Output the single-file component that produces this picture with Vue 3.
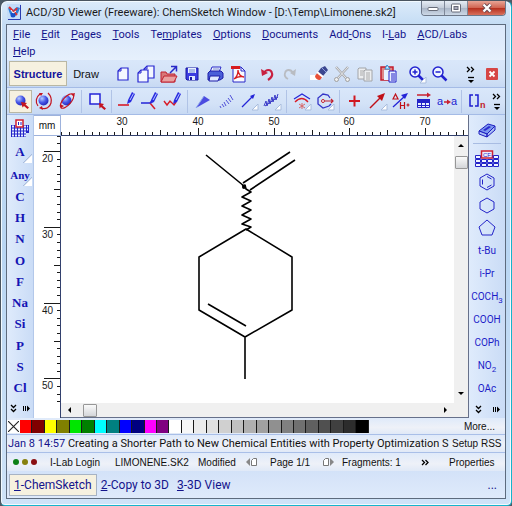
<script setup>
const menus = [
  ['', 'F', 'ile'], ['', 'E', 'dit'], ['', 'P', 'ages'], ['', 'T', 'ools'],
  ['Te', 'm', 'plates'], ['', 'O', 'ptions'], ['', 'D', 'ocuments'],
  ['Add', '-', 'Ons'], ['I-', 'L', 'ab'], ['', 'A', 'CD/Labs'], ['', 'H', 'elp'],
]

const pencil = '<path d="M11 9l4-8 3 2-4 8-4 2z" fill="#2a2ae0"/><path d="M13 9l3.5-6.5" stroke="#b4caff" stroke-width="1"/>'
const sheet = (x, y) => `<path d="M${x + 3} ${y}h7v12h-10v-9z" fill="#f4f7ff" stroke="#2525d0" stroke-width="1.2"/><path d="M${x + 3} ${y}v3h-3" fill="none" stroke="#2525d0"/>`
const ball = '<circle cx="9.5" cy="9.5" r="5" fill="url(#ball)"/>'
const corner = '<path d="M19 13v6h-6z" fill="#fff" stroke="#a9bddd" stroke-width="1"/>'
const lens = (mark) => `<path d="M11.5 11.5l5 5" stroke="#2222d0" stroke-width="2.5"/><circle cx="8" cy="8" r="5" fill="#eef5ff" stroke="#2222d0" stroke-width="1.5"/><path d="${mark}" stroke="#2222d0" stroke-width="1.5"/>`

const icons = {
  new: sheet(5, 4),
  copies: sheet(8, 2) + sheet(2, 6),
  open: '<path d="M2 8h5l1 2h8v8H2z" fill="#d87878" stroke="#c02030"/><path d="M2 18l3-6h13l-3 6z" fill="#e9a0a0" stroke="#c02030"/><path d="M11 9l6-6M12 2.5h5.5v5" fill="none" stroke="#2828c8" stroke-width="1.5"/>',
  save: '<path d="M4 4h12v12H5l-1-1z" fill="#3c3ce0" stroke="#1818a0"/><path d="M6 4h8v5H6z" fill="#e8f0ff"/><path d="M7 6h6M7 8h6" stroke="#7088d0"/><path d="M7 12h6v4H7z" fill="#dfe8ff"/><path d="M8 13h2v3H8z" fill="#1818a0"/>',
  print: '<path d="M7 3h9l-2 5H5z" fill="#eef3ff" stroke="#2828c8"/><path d="M3 9l2-2h11l2 2v5l-3 2H3z" fill="#4a5fd8" stroke="#1c1ca8"/><path d="M5 12h10l-2 5H4z" fill="#dfe8ff" stroke="#1c1ca8"/><path d="M8 5h6" stroke="#8090d0"/>',
  pdf: '<path d="M5 3h8l4 4v11H5z" fill="#f8faff" stroke="#2828c8"/><path d="M13 3v4h4" fill="none" stroke="#2828c8"/><path d="M3 2h9v3H3z" fill="#d81c20"/><path d="M6 15c3-2 4-6 4-9 0 4 3 7 6 7-3-1-7 0-10 2z" fill="none" stroke="#d81c20" stroke-width="1.3"/>',
  undo: '<path d="M7 9c2-4 7-4 8 0 1 3-1 5-4 7" fill="none" stroke="#c82040" stroke-width="2.2"/><path d="M4 5l1 7 6-3z" fill="#c82040"/>',
  redo: '<path d="M13 9c-2-4-7-4-8 0-1 3 1 5 3 6" fill="none" stroke="#b9bcc2" stroke-width="1.8"/><path d="M16 5l-1 7-5-3z" fill="#b9bcc2"/>',
  clean: '<path d="M1 11h8v5H1z" fill="#fff"/><path d="M12 4l4-2 3 4-5 6-5-4z" fill="#3b4790"/><path d="M9 8l5 4-3 4c-3 0-5-2-5-4z" fill="#e85038"/><path d="M8 8l6 5" stroke="#fff" stroke-width="2"/><path d="M13 4l4 4" stroke="#8fa0e0"/>',
  cut: '<path d="M4 3l10 11M16 3L6 14" stroke="#a8a9ac" stroke-width="2.5"/><path d="M4 3l10 11M16 3L6 14" stroke="#e6e8ea" stroke-width="1"/><circle cx="4.500" cy="15.5" r="2" fill="#eee" stroke="#a0a0a0"/><circle cx="15.5" cy="15.5" r="2" fill="#eee" stroke="#a0a0a0"/>',
  copy: '<path d="M4 4h7v11H3V5z" fill="#eceef0" stroke="#a2a4a8"/><path d="M10 6h7v11H9V7z" fill="#eceef0" stroke="#a2a4a8"/><path d="M5 7h4M5 9h3M5 11h3M11 9h4M11 11h4M11 13h4M11 15h4" stroke="#aaa"/>',
  paste: '<path d="M3 3h12v13H3z" fill="#dc8888" stroke="#c41c2c" stroke-width="1.5"/><path d="M7 5l2-4 3 4z" fill="#d8f0ff" stroke="#2a90d8"/><path d="M6 6h5v10H6z" fill="#e8f2ff"/><path d="M11 7h7v11h-7z" fill="#e8eeff" stroke="#2222c8"/><path d="M13 10h4M13 12h4M13 14h4M13 16h4" stroke="#2222c8"/>',
  zoomin: lens('M5.5 8h5M8 5.5v5') + corner,
  zoomout: lens('M5.5 8h5'),
  pick: ball + '<path d="M10 11l6 1-1.500 1.500 3.500 3-1.500 1.500-3.500-3-1.500 1.500z" fill="#c41420"/>',
  rotate: ball + '<path d="M4 15c-3-4-2-9 2-12M7 17c5 2 9-1 10-5 1-4 0-7-3-10" fill="none" stroke="#c41420" stroke-width="1.2"/><path d="M5 2h4l-2 3zM8 15l-3 2 4 2z" fill="#c41420"/>',
  rotate3d: ball + '<ellipse cx="10" cy="10" rx="9" ry="4" transform="rotate(-48 10 10)" fill="none" stroke="#c41420" stroke-width="1.2"/><path d="M4 17l-1-4 4 2zM14 3l4-1-1 4z" fill="#c41420"/>',
  lasso: '<path d="M3 3h10v10H3z" fill="#eef4ff" stroke="#2424d8" stroke-width="1.5"/><path d="M12 12l5 1-1.500 1.500 3.500 3-1.500 1.500-3.500-3-1.500 1.500z" fill="#c41420"/>',
  draw: '<path d="M1 14h11" stroke="#d81c28" stroke-width="1.6"/>' + pencil,
  branch: '<path d="M1 12h9l2-2" fill="none" stroke="#2424d8" stroke-width="1.5"/><path d="M10 12l5 6" stroke="#d81c28" stroke-width="1.5"/>' + pencil,
  chain: '<path d="M1 10l3 4 3-4 4 4 2-3" fill="none" stroke="#d81c28" stroke-width="1.4"/>' + pencil,
  wedge: '<path d="M3 17L11 5l6 4z" fill="#4c4ce0"/><path d="M3 17L11 5" stroke="#8ca4ec"/>',
  hash: '<path d="M4 15l1 2M6 13l2 3M8 11l2 4M10 9l3 4M12 7l3 4M14 4l3 5" stroke="#5050d8" stroke-width="1"/>',
  arrow: '<path d="M3 16L14 5" stroke="#2424d8" stroke-width="1.3"/><path d="M16 3l-2 5-3-3z" fill="#2424d8"/>' + corner,
  zig: '<path d="M2 15l2-5 1 5 2-7 1 5 2-7 1 5 2-7 1 5 2-6M3 15L16 6" fill="none" stroke="#3a3ac8" stroke-width="1"/>' + corner,
  angle: '<path d="M2 8l8-5 8 5" fill="none" stroke="#2424d8" stroke-width="1.2"/><path d="M3 11q7-7 13 0" fill="none" stroke="#d81c28" stroke-width="1.3"/><path d="M10 12v6M7 13l6 4M13 13l-6 4" stroke="#d86868"/>' + corner,
  ring: '<path d="M15 7l-2-3-5-1-5 4v6l5 4 6-2 2-2" fill="none" stroke="#3434c8" stroke-width="1.3"/><circle cx="8" cy="10" r="1.5" fill="#fff" stroke="#c02030"/><path d="M10 10h8M16 8l2 2-2 2" fill="none" stroke="#c02030" stroke-width="1.2"/>' + corner,
  plus: '<path d="M4 10h11M9.5 4.500v11" stroke="#d01820" stroke-width="2"/>',
  react: '<path d="M2 17L13 6" stroke="#c01018" stroke-width="1.5"/><path d="M17 2l-3 8-5-5z" fill="#c01018"/>' + corner,
  delta: '<path d="M2 8l2.500-5L7 8z" fill="none" stroke="#c01018" stroke-width="1.2"/><path d="M2 16L14 5" stroke="#2424d8" stroke-width="1.3"/><path d="M17 2l-3 6-4-4z" fill="#2424d8"/><path d="M9.500 11v7M13.500 11v7M9.500 14.500h4M15.500 14h3M17 12.500v3" stroke="#c01018" stroke-width="1.2"/>',
  table: '<path d="M3 4h11" stroke="#c82030" stroke-width="1.5"/><path d="M13 1.500l4 2.500-4 2.500z" fill="#c82030"/><path d="M3.500 8.500h12v8h-12z" fill="#e8f2ff" stroke="#2424c8"/><path d="M3 8h13v4H3z" fill="#2424c8"/><path d="M3 14.500h13M7.500 12v5M11.500 12v5" stroke="#2424c8"/>',
  atob: '<text x="0" y="14" font-size="11" font-family="Liberation Sans, sans-serif" fill="#1c1cd0">a</text><text x="14" y="14" font-size="11" font-family="Liberation Sans, sans-serif" fill="#1c1cd0">a</text><path d="M7 11h4" stroke="#c82030" stroke-width="1.5"/><path d="M10 8.500l4 2.500-4 2.500z" fill="#c82030"/>',
  bracket: '<path d="M6 4H3v11h3M8 4h3v11H8" fill="none" stroke="#1c1cd0" stroke-width="1.5"/><text x="13" y="17" font-size="9" font-weight="bold" font-family="Liberation Sans, sans-serif" fill="#c01828">n</text>',
  eraser: '<path d="M2 12l9-7 7 2-8 8z" fill="#7c98ee" stroke="#1c1cc0"/><path d="M2 12v3l8 3v-3zM10 15v3l8-7V7z" fill="#aabff5" stroke="#1c1cc0"/><path d="M6 11l6-4 2 1-6 4z" fill="#2a2ad0"/>',
}

const standard = [
  [['new', 'New'], ['copies', 'New page'], ['open', 'Open'], ['save', 'Save'], ['print', 'Print'], ['pdf', 'Export PDF']],
  [['undo', 'Undo'], ['redo', 'Redo']],
  [['clean', 'Clean'], ['cut', 'Cut'], ['copy', 'Copy'], ['paste', 'Paste']],
  [['zoomin', 'Zoom in'], ['zoomout', 'Zoom out']],
]
const drawing = [
  [['pick', 'Select and move'], ['rotate', 'Rotate'], ['rotate3d', '3D rotate']],
  [['lasso', 'Select']],
  [['draw', 'Draw normal'], ['branch', 'Draw continuous'], ['chain', 'Draw chains']],
  [['wedge', 'Up bond'], ['hash', 'Down bond'], ['arrow', 'Coordinating bond'], ['zig', 'Undefined bond']],
  [['angle', 'Set angle'], ['ring', 'Markush bond']],
  [['plus', 'Reaction plus'], ['react', 'Reaction arrow'], ['delta', 'Conditions'], ['table', 'Auto map'], ['atob', 'Atom map']],
  [['bracket', 'Polymer']],
]

const elements = ['C', 'H', 'N', 'O', 'F', 'Na', 'Si', 'P', 'S', 'Cl']
const radicals = [['t-Bu'], ['i-Pr'], ['COCH', '3'], ['COOH'], ['COPh'], ['NO', '2'], ['OAc']]

const UNIT = 7.58
const topTicks = Array.from({ length: 54 }, (_, i) => {
  const v = i + 22
  return { v, pos: Math.round((v - 30) * UNIT + 61), size: v % 10 === 0 ? 7 : v % 5 === 0 ? 5 : 3 }
})
const sideTicks = Array.from({ length: 36 }, (_, i) => {
  const v = i + 18
  return { v, pos: Math.round((v - 20) * UNIT + 15), size: v % 10 === 0 ? 16 : v % 5 === 0 ? 6 : 3 }
})

const greys = [255, 247, 236, 224, 208, 192, 176, 160, 144, 128, 112, 96, 80, 64, 44, 0].map((g) => `rgb(${g},${g},${g})`)
const palette = ['#ff0000', '#800000', '#ffff00', '#808000', '#00e600', '#008000', '#00ffff', '#008080', '#0000ff', '#000080', '#ff00ff', '#800080', ...greys]
</script>

<template>
  <div class="window">
    <svg class="defs" width="0" height="0" aria-hidden="true">
      <defs>
        <radialGradient id="ball" cx=".35" cy=".3" r=".8">
          <stop offset="0" stop-color="#b8ccff" />
          <stop offset=".5" stop-color="#4858e8" />
          <stop offset="1" stop-color="#1c1cb0" />
        </radialGradient>
      </defs>
    </svg>

    <header class="title">
      <svg class="logo" viewBox="0 0 14 16">
        <rect width="14" height="16" fill="#c3dcf8" />
        <path d="M13.500 1v14.500H1" fill="none" stroke="#2a3cb0" />
        <path d="M1 4l5 2 4-3 3 1-2 5-4 4-4-3z" fill="#2b7fd8" />
        <path d="M2 3l4 4M10 4L7 8l3 3" stroke="#e03030" stroke-width="2" fill="none" />
        <circle cx="6" cy="11" r="2.500" fill="#1850c8" />
        <path d="M4 6l2 3 3-2" stroke="#fff" fill="none" />
      </svg>
      <h1>ACD/3D Viewer (Freeware): ChemSketch Window - [D:\Temp\Limonene.sk2]</h1>
      <div class="winbtns">
        <button aria-label="Minimize"><svg viewBox="0 0 12 10"><rect x="1" y="4.500" width="10" height="3" rx="1" fill="#fff" stroke="#666b78" /></svg></button>
        <button aria-label="Maximize"><svg viewBox="0 0 12 10"><rect x="1.500" y="1" width="9" height="8" rx="1" fill="#fff" stroke="#666b78" /><rect x="4" y="3.500" width="4" height="3" fill="#aab" stroke="#666b78" /></svg></button>
        <button class="close" aria-label="Close"><svg viewBox="0 0 12 10"><path d="M2.500 1.500l7 7M9.500 1.500l-7 7" stroke="#6a4a52" stroke-width="4" /><path d="M2.500 1.500l7 7M9.500 1.500l-7 7" stroke="#fff" stroke-width="2.300" /></svg></button>
      </div>
    </header>

    <div class="inner">
      <nav class="menu">
        <a v-for="m in menus" :key="m.join('')" href="#">{{ m[0] }}<u>{{ m[1] }}</u>{{ m[2] }}</a>
      </nav>

      <div class="bar standard">
        <button class="mode active">Structure</button>
        <button class="mode plain">Draw</button>
        <div v-for="(g, i) in standard" :key="i" class="group">
          <button v-for="b in g" :key="b[0]" class="tool" :aria-label="b[1]"><svg viewBox="0 0 20 20" v-html="icons[b[0]]" /></button>
        </div>
        <button class="more" aria-label="More standard tools">
          <svg viewBox="0 0 10 20"><path d="M1 3l2.500 2.500L1 8M5 3l2.500 2.500L5 8" /><path d="M2 13.500h6" /><path class="fill" d="M2 16h6l-3 3z" /></svg>
        </button>
        <button class="shut" aria-label="Close document">
          <svg viewBox="0 0 12 12"><rect width="12" height="12" rx="1" fill="#d64545" /><path d="M3.500 3.500l5 5M8.500 3.500l-5 5" stroke="#fff" stroke-width="1.800" /></svg>
        </button>
      </div>

      <div class="bar drawing">
        <div v-for="(g, i) in drawing" :key="i" class="group">
          <button v-for="b in g" :key="b[0]" class="tool" :class="{ active: b[0] === 'pick' }" :aria-label="b[1]"><svg viewBox="0 0 20 20" v-html="icons[b[0]]" /></button>
        </div>
        <button class="more" aria-label="More drawing tools">
          <svg viewBox="0 0 10 20"><path d="M1 3l2.500 2.500L1 8M5 3l2.500 2.500L5 8" /><path d="M2 13.500h6" /><path class="fill" d="M2 16h6l-3 3z" /></svg>
        </button>
      </div>

      <main class="work">
        <aside class="side left">
          <button class="head" aria-label="Periodic table">
            <svg viewBox="0 0 18 18" width="18" height="18">
              <path d="M0 6h18v8h-3v4H0z" fill="#2424c8" />
              <path d="M1 7.500h16M1 10.500h16M1 13.500h14M1 16.500h14" stroke="#e4eeff" stroke-width="2" stroke-dasharray="2 1" />
              <rect x="5" y="1" width="7" height="7" fill="#fff" stroke="#d02030" stroke-width="1.500" />
              <path d="M7.500 3v3M10 3v3" stroke="#2424c8" />
            </svg>
          </button>
          <button class="atom big">A<i class="flag" /></button>
          <button class="atom any">Any<i class="flag" /></button>
          <div class="elements">
            <button v-for="e in elements" :key="e">{{ e }}</button>
          </div>
          <div class="foot">
            <svg viewBox="0 0 9 9"><path d="M2 1l2.500 2.500L7 1M2 5l2.500 2.500L7 5" /></svg>
            <svg viewBox="0 0 9 9"><path class="fill" d="M1 2h1v5H1zM3 2h1v5H3zM5 1.500v6l3-3z" /></svg>
          </div>
        </aside>

        <div class="unit">mm</div>
        <svg class="ruler top">
          <g v-for="t in topTicks" :key="t.v">
            <rect :x="t.pos" :y="20 - t.size" width="1" :height="t.size" />
            <text v-if="t.v % 10 === 0" :x="t.pos" y="10" text-anchor="middle">{{ t.v }}</text>
          </g>
        </svg>
        <svg class="ruler vert">
          <g v-for="t in sideTicks" :key="t.v">
            <rect :x="26 - t.size" :y="t.pos" :width="t.size" height="1" />
            <text v-if="t.v % 10 === 0" x="8" :y="t.pos + 11">{{ t.v }}</text>
          </g>
        </svg>

        <svg class="canvas" role="img" aria-label="Limonene structure">
          <g fill="none" stroke="#000" stroke-width="1.600" stroke-linejoin="round">
            <path d="M145 19L183 50M182 47L229 16M189 54L234 24" />
            <path d="M181 50l3-1 1 4 5 3-9 5 9 4-9 5 9 4-9 5 9 4-9 5 9 3-5 3" />
            <path d="M185 93l46 28v53l-47 27-46-27v-53zM147 168l38 22M184 201v42" />
          </g>
          <circle cx="183" cy="51" r="2" />
        </svg>

        <div class="vscroll">
          <button aria-label="Scroll up"><svg viewBox="0 0 6 4"><path d="M0 4l3-3 3 3z" /></svg></button>
          <span class="thumb" />
          <button aria-label="Scroll down"><svg viewBox="0 0 6 4"><path d="M0 0l3 3 3-3z" /></svg></button>
        </div>
        <div class="hscroll">
          <button aria-label="Scroll left"><svg class="h" viewBox="0 0 4 6"><path d="M4 0L1 3l3 3z" /></svg></button>
          <span class="thumb" />
          <button aria-label="Scroll right"><svg class="h" viewBox="0 0 4 6"><path d="M0 0l3 3-3 3z" /></svg></button>
        </div>
        <div class="scorner" />

        <aside class="side right">
          <button class="head" aria-label="Template window"><svg viewBox="0 0 20 20" width="20" height="20" v-html="icons.eraser" /></button>
          <hr>
          <button aria-label="Table of radicals">
            <svg viewBox="0 0 24 18" width="24" height="18">
              <g fill="#f0f5ff" stroke="#2424c8">
                <path d="M.5 5.500h5v3h-5zM18.500 5.500h5v3h-5zM.5 9.500h5v3h-5zM6.500 9.500h5v3h-5zM12.500 9.500h5v3h-5zM18.500 9.500h5v3h-5zM.5 13.500h5v3h-5zM6.500 13.500h5v3h-5zM12.500 13.500h5v3h-5zM18.500 13.500h5v3h-5z" />
              </g>
              <rect x="6.500" y="1" width="11" height="7" fill="#e9efff" stroke="#d02030" stroke-width="1.500" />
              <text x="8" y="7" font-size="6" font-family="Liberation Sans, sans-serif" fill="#2424c8">CF₃</text>
            </svg>
          </button>
          <button aria-label="Benzene">
            <svg viewBox="0 0 18 18" width="18" height="18" class="line"><path d="M9 1l7 4v8l-7 4-7-4V5zM4.500 6.500v5M9 3.500l4.500 2.500M9 14.500l4.500-2.500" /></svg>
          </button>
          <button aria-label="Cyclohexane">
            <svg viewBox="0 0 18 18" width="18" height="18" class="line"><path d="M9 2l7 4v7l-7 4-7-4V6z" /></svg>
          </button>
          <button aria-label="Cyclopentane">
            <svg viewBox="0 0 18 18" width="18" height="18" class="line"><path d="M9 1l8 7-3 8H4L1 8z" /></svg>
          </button>
          <button v-for="r in radicals" :key="r[0]" class="radical"><span>{{ r[0] }}<sub v-if="r[1]">{{ r[1] }}</sub></span></button>
          <div class="foot">
            <svg viewBox="0 0 9 9"><path d="M2 1l2.500 2.500L7 1M2 5l2.500 2.500L7 5" /></svg>
            <svg viewBox="0 0 9 9"><path class="fill" d="M1 2h1v5H1zM3 2h1v5H3zM5 1.500v6l3-3z" /></svg>
          </div>
        </aside>
      </main>

      <div class="colors">
        <button class="none" aria-label="No color"><svg viewBox="0 0 10 10"><path d="M0 0l10 10M10 0L0 10" stroke="#222" /></svg></button>
        <div class="strip">
          <button v-for="(c, i) in palette" :key="i" class="swatch" :style="{ background: c }" :aria-label="'Color ' + (i + 1)" />
        </div>
        <button class="textbtn">More...</button>
      </div>

      <div class="rss">
        <p><time>Jan 8 14:57</time> Creating a Shorter Path to New Chemical Entities with Property Optimization S</p>
        <button class="textbtn">Setup RSS</button>
      </div>

      <footer class="status">
        <span class="dots"><i class="g" /><i class="o" /><i class="r" /></span>
        <span class="login">I-Lab Login</span>
        <span class="file">LIMONENE.SK2</span>
        <span class="state">Modified</span>
        <button class="page" aria-label="Previous page"><svg viewBox="0 0 13 10"><path d="M5 1v8L1 5z" fill="#888" /><path d="M8.500 1.500h3v7h-5v-5z" fill="#fff" stroke="#777" /></svg></button>
        <span class="count">Page 1/1</span>
        <button class="page" aria-label="Next page"><svg viewBox="0 0 13 10"><path d="M3.500 1.500h3v7h-5v-5z" fill="#fff" stroke="#777" /><path d="M8 1v8l4-4z" fill="#888" /></svg></button>
        <span class="frag">Fragments: 1</span>
        <button class="chev" aria-label="More status"><svg viewBox="0 0 8 7"><path d="M1 1l2.500 2.500L1 6M4.500 1L7 3.500 4.500 6" fill="none" stroke="#000" stroke-width="1.300" /></svg></button>
        <button class="textbtn">Properties</button>
      </footer>

      <nav class="tabs">
        <a href="#" class="active"><u>1</u>-ChemSketch</a>
        <a href="#"><u>2</u>-Copy to 3D</a>
        <a href="#"><u>3</u>-3D View</a>
        <button class="dotsbtn">...</button>
      </nav>
    </div>
  </div>
</template>

<style>
body { background: #4b5a66; }
</style>

<style scoped>
* { box-sizing: border-box; }
button { border: 0; padding: 0; margin: 0; background: none; font: inherit; color: inherit; }
a { text-decoration: none; color: inherit; }
.defs { position: absolute; }

.window {
  display: flex;
  flex-direction: column;
  height: 100vh;
  padding: 0 5px 6px;
  border: 1px solid #4a5560;
  border-right-color: #16b4cc;
  border-bottom-color: #16b4cc;
  border-radius: 7px 7px 5px 5px;
  background: linear-gradient(#dcebfa, #c4dcf4 24px, #b9d6f3 50%, #cfe3f8);
  box-shadow: inset 0 0 0 1px #f2faff;
  font-family: "Liberation Sans", Arial, sans-serif;
  font-size: 11px;
  color: #111;
}
.title { display: flex; align-items: flex-start; height: 23px; flex: none; padding-left: 1px; }
.logo { width: 14px; height: 16px; margin-top: 3px; }
.title h1 {
  flex: 1; min-width: 0; margin: 0; padding: 4px 0 0 5px;
  font: 11px/16px Roboto, "Segoe UI", sans-serif;
  white-space: nowrap; color: #1a1a1a;
}
.winbtns { display: flex; height: 15px; border: 1px solid #6d7889; border-top: 0; border-radius: 0 0 4px 4px; overflow: hidden; }
.winbtns button { width: 23px; border-right: 1px solid #7f8898; display: grid; place-items: center; background: linear-gradient(#e6edf5, #c2cbd8 50%, #a9b5c6 50%, #ccd8e6); }
.winbtns button.close { width: 37px; border-right: 0; background: linear-gradient(#e8a596, #d0624f 50%, #b52e1c 50%, #d8705c); }
.winbtns svg { width: 12px; height: 10px; }

.inner { flex: 1; min-height: 0; display: flex; flex-direction: column; border: 1px solid #5d6b7e; background: #d5e4f8; }

.menu {
  display: flex; flex-wrap: wrap; align-content: center; column-gap: 11px; height: 35px; flex: none; padding: 0 6px;
  background: linear-gradient(#dce9fb, #dfebfb 50%, #e6f0fc);
  font: 11px/17px Roboto, "Segoe UI", sans-serif; color: #14148c;
}
.bar { display: flex; align-items: center; flex: none; padding-left: 2px; background: linear-gradient(#d9e7fa, #d3e2f7 60%, #c7d9f3); border-bottom: 1px solid #a4bbe6; }
.bar.standard { height: 28px; }
.bar.drawing { height: 27px; }
.mode { height: 25px; font-size: 11px; }
.mode.active { width: 58px; font-weight: bold; color: #14149c; }
.mode.plain { width: 44px; padding-right: 6px; }
.active { background: #f6f1e0; border: 1px solid #b9b7a4; }
.group { display: flex; }
.standard .group + .group { margin-left: 6px; }
.drawing .group + .group { margin-left: 3px; padding-left: 3px; border-left: 1px solid #b0c3e6; }
.tool { width: 23px; height: 23px; display: grid; place-items: center; }
.tool svg { width: 20px; height: 20px; overflow: visible; }
.more { width: 16px; height: 20px; margin-left: auto; }
.more svg { display: block; width: 10px; height: 20px; margin: 0 auto; fill: none; stroke: #000; stroke-width: 1.3; }
.fill { fill: #000; stroke: none; }
.shut { width: 26px; display: grid; place-items: center; }
.shut svg { width: 12px; height: 12px; }

.work {
  flex: 1; min-height: 0; display: grid;
  grid-template-columns: 27px 27px 1fr 14px 37px;
  grid-template-rows: 21px 1fr 15px;
  background: #fff;
}
.side { grid-row: 1 / 4; display: flex; flex-direction: column; background: linear-gradient(90deg, #dfebfc, #cadcf6); }
.side.left { grid-column: 1; border-right: 1px solid #b3c8ea; color: #1414b4; font-family: "Liberation Serif", serif; font-weight: bold; }
.side.right { grid-column: 5; border-left: 1px solid #66708a; color: #1c1cc8; }
.side button { display: grid; place-items: center; height: 23px; flex: none; }
.side .head { height: 25px; }
.side.right .head { height: 28px; }
.side hr { width: 28px; margin: 0 auto 3px; border: 0; border-top: 1px solid #a8bce2; }
.atom { position: relative; font-size: 13px; line-height: 16px; }
.side .any { font-size: 11px; }
.flag { position: absolute; right: 1px; bottom: 0; width: 9px; height: 9px; background: linear-gradient(135deg, transparent 50%, #a9bddd 50%, #fff 60%); }
.elements { flex: 1; min-height: 0; display: flex; flex-direction: column; font-size: 13px; }
.elements button { flex: 1; }
.line { fill: none; stroke: #2424c8; stroke-width: 1; }
.side .radical { font-family: Roboto, "Liberation Sans", sans-serif; font-size: 10px; }
.radical sub { font-size: 8px; line-height: 1px; }
.foot { display: flex; justify-content: space-around; align-items: center; height: 19px; margin-top: auto; }
.foot svg { width: 9px; height: 9px; fill: none; stroke: #000; stroke-width: 1.3; }
.foot .fill { stroke: none; }

.unit { grid-column: 2; grid-row: 1; display: grid; place-items: center; border: 1px solid #9db2dc; border-width: 1px 1px 1px 0; font-size: 10px; background: #fff; }
.ruler { display: block; width: 100%; height: 100%; overflow: hidden; font-size: 10px; fill: #1a1a1a; background: #fff; }
.ruler.top { grid-column: 3 / 5; grid-row: 1; border-bottom: 1px solid #33416e; }
.ruler.vert { grid-column: 2; grid-row: 2 / 4; border-right: 1px solid #33416e; }
.canvas { grid-column: 3; grid-row: 2; width: 100%; height: 100%; min-height: 0; overflow: hidden; background: #fff; }
.vscroll { grid-column: 4; grid-row: 2; display: flex; flex-direction: column; align-items: center; background: #f0f0f0; }
.vscroll button { height: 18px; width: 14px; display: grid; place-items: center; }
.vscroll .thumb { width: 13px; height: 13px; margin-top: 2px; }
.vscroll button:last-child { margin-top: auto; }
.vscroll svg { width: 6px; height: 4px; }
.hscroll { grid-column: 3; grid-row: 3; display: flex; align-items: center; background: #f0f0f0; border-bottom: 1px solid #66708a; }
.hscroll button { width: 16px; height: 14px; display: grid; place-items: center; }
.hscroll .thumb { width: 14px; height: 13px; margin-left: 6px; }
.hscroll button:last-child { margin-left: auto; }
.hscroll svg { width: 4px; height: 6px; }
.thumb { border: 1px solid #979797; border-radius: 1px; background: linear-gradient(#fafafa, #d4d6d9); }
.scorner { grid-column: 4; grid-row: 3; background: #f0f0f0; border-bottom: 1px solid #66708a; }

.colors, .rss, .status { display: flex; align-items: center; flex: none; background: linear-gradient(#dfeafa, #eef1f8 60%, #e0e9f7); }
.colors { height: 16px; }
.none { width: 13px; height: 13px; padding: 1px; background: #fff; }
.none svg { display: block; width: 11px; height: 11px; }
.strip { display: flex; width: 70%; height: 13px; }
.swatch { flex: 1; border-right: 1px solid #1a1a1a; }
.textbtn { font-size: 10px; white-space: nowrap; }
.colors .textbtn { margin-left: auto; padding-right: 10px; }
.rss { height: 19px; border: 1px solid #a9bfe8; border-width: 1px 0; }
.rss p { flex: 1; min-width: 0; margin: 0 0 0 1px; white-space: nowrap; overflow: hidden; font: 11px/16px Roboto, sans-serif; }
.rss time { color: #14148c; }
.status .textbtn { width: 64px; padding-left: 8px; text-align: left; }
.rss .textbtn { width: 53px; text-align: left; }
.status { height: 18px; font-size: 10px; white-space: nowrap; }
.dots { display: flex; gap: 3px; width: 43px; padding-left: 6px; }
.dots i { width: 6px; height: 6px; border-radius: 50%; }
.g { background: #0d8016; }
.o { background: #86800e; }
.r { background: #8a0f12; }
.login { width: 65px; }
.file { width: 83px; }
.state { width: 47px; }
.page { width: 13px; height: 10px; }
.page svg { display: block; width: 13px; height: 10px; }
.count { width: 64px; padding-left: 12px; }
.frag { padding-left: 7px; }
.chev { margin-left: auto; width: 20px; height: 8px; }
.chev svg { display: block; width: 8px; height: 7px; }

.tabs { display: flex; align-items: center; flex: none; height: 27px; padding: 0 8px 0 2px; background: linear-gradient(#d3e2f8, #dfeafb); font: 12px/20px Roboto, sans-serif; color: #14148c; }
.tabs a { padding: 0 4px; white-space: nowrap; }
.tabs a.active { border-color: #a7b3c4; }
.dotsbtn { margin-left: auto; }
</style>
